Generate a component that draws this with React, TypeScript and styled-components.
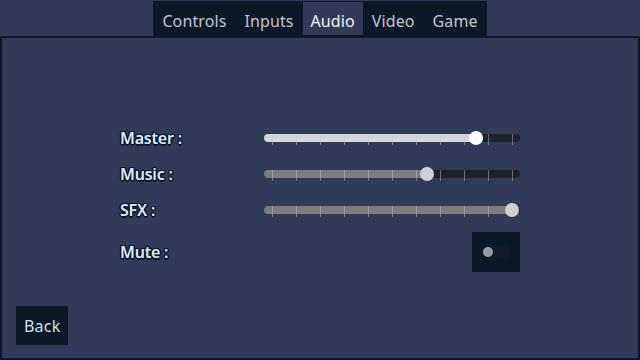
import React, { useState } from 'react'
import styled, { createGlobalStyle } from 'styled-components';

const palette = {
    bg: '#323a59',
    dark: '#0a1829',
    track: '#1f222c',
    label: '#dcefff',
    tab: '#c4c6cc',
};

const GlobalStyle = createGlobalStyle`
    html, body {
        margin: 0;
        padding: 0;
        background: ${palette.bg};
        font-family: "Noto Sans", "DejaVu Sans", sans-serif;
    }
    * { box-sizing: border-box; }
`;

const Screen = styled.div`
    width: 640px;
    height: 360px;
    display: flex;
    flex-direction: column;
    overflow: hidden;
`;

const TabBar = styled.div`
    align-self: center;
    display: flex;
    background: ${palette.dark};
    margin-top: 1px;
    padding: 1px 0 0 0;
    height: 36px;
    position: relative;
    z-index: 1;
`;

const Tab = styled.div<{ $active?: boolean }>`
    height: 33px;
    padding: 4px 8px 0;
    display: flex;
    align-items: center;
    font-size: 16px;
    letter-spacing: 0.1px;
    color: ${(p) => (p.$active ? '#f2f4f8' : palette.tab)};
    background: ${(p) => (p.$active ? palette.bg : 'transparent')};
    margin: 0 ${(p) => (p.$active ? 0 : 1)}px;
`;

const Panel = styled.div`
    flex: 1;
    margin-top: -1px;
    border: 2px solid ${palette.dark};
    display: flex;
    flex-direction: column;
    padding: 0 14px 13px;
`;

const Body = styled.div`
    flex: 1;
    display: flex;
    align-items: center;
    justify-content: center;
    padding-top: 40px;
`;

const Grid = styled.div`
    width: 400px;
    display: grid;
    grid-template-columns: 144px 256px;
    grid-auto-rows: 36px;
    align-items: center;
`;

const Label = styled.div`
    font-size: 16px;
    font-weight: 600;
    letter-spacing: -0.2px;
    color: ${palette.label};
    text-shadow: -1px -1px 0 ${palette.dark}, 1px -1px 0 ${palette.dark}, -1px 1px 0 ${palette.dark}, 1px 1px 0 ${palette.dark}, 0 1.5px 0 ${palette.dark}, 0 -1.5px 0 ${palette.dark}, 1.5px 0 0 ${palette.dark}, -1.5px 0 0 ${palette.dark};
`;

const SliderWrap = styled.div`
    position: relative;
    height: 20px;
`;

const Track = styled.div`
    position: absolute;
    left: 0;
    right: 0;
    top: 6px;
    height: 8px;
    border-radius: 4px;
    background: ${palette.track};
    overflow: hidden;
`;

const Fill = styled.div<{ $bright?: boolean }>`
    height: 100%;
    background: ${(p) => (p.$bright ? '#d6d6d8' : '#7b7c80')};
`;

const Tick = styled.div`
    position: absolute;
    top: 6px;
    width: 1px;
    height: 11px;
    background: rgba(200, 200, 205, 0.45);
`;

const Grabber = styled.div<{ $bright?: boolean }>`
    position: absolute;
    top: 3px;
    width: 14px;
    height: 14px;
    margin-left: -7px;
    border-radius: 50%;
    background: ${(p) => (p.$bright ? '#ffffff' : '#d0d0d2')};
`;

const ToggleCell = styled.div`
    display: flex;
    justify-content: flex-end;
    margin-top: 12px;
`;

const ToggleBox = styled.div`
    width: 48px;
    height: 40px;
    background: ${palette.dark};
    display: flex;
    align-items: center;
    justify-content: center;
`;

const SwitchTrack = styled.div`
    width: 28px;
    height: 14px;
    border-radius: 7px;
    background: #121b27;
    display: flex;
    align-items: center;
    padding-left: 1px;
`;

const SwitchKnob = styled.div`
    width: 10px;
    height: 10px;
    border-radius: 50%;
    background: #9a9ba0;
`;

const MuteLabel = styled(Label)`
    margin-top: 12px;
`;

const Footer = styled.div`
    display: flex;
`;

const Button = styled.button`
    height: 39px;
    padding: 0 8px;
    border: none;
    background: ${palette.dark};
    color: #cfe2f5;
    font-family: inherit;
    font-size: 16px;
    letter-spacing: 0.2px;
`;

const tabs = ['Controls', 'Inputs', 'Audio', 'Video', 'Game'];

// value 0..1, grabber slides between the first and last tick
const Slider: React.FC<{ value: number; active?: boolean }> = ({ value, active }) => {
    const ticks = Array.from({ length: 11 }, (_, i) => 8 + i * 24);
    const x = 8 + value * 240;
    return (
        <SliderWrap>
            <Track>
                <Fill $bright={active} style={{ width: `${x}px` }} />
            </Track>
            {ticks.map((t) => (
                <Tick key={t} style={{ left: `${t - 0.5}px` }} />
            ))}
            <Grabber $bright={active} style={{ left: `${x}px` }} />
        </SliderWrap>
    );
};

const App: React.FC = () => {
    const [active] = useState('Audio');

    return (
        <Screen>
            <GlobalStyle />
            <TabBar>
                {tabs.map((t) => (
                    <Tab key={t} $active={t === active}>{t}</Tab>
                ))}
            </TabBar>
            <Panel>
                <Body>
                    <Grid>
                        <Label>Master :</Label>
                        <Slider value={0.85} active />
                        <Label>Music :</Label>
                        <Slider value={0.645} />
                        <Label>SFX :</Label>
                        <Slider value={1} />
                        <MuteLabel>Mute :</MuteLabel>
                        <ToggleCell>
                            <ToggleBox>
                                <SwitchTrack>
                                    <SwitchKnob />
                                </SwitchTrack>
                            </ToggleBox>
                        </ToggleCell>
                    </Grid>
                </Body>
                <Footer>
                    <Button>Back</Button>
                </Footer>
            </Panel>
        </Screen>
    )
}

export default App;
